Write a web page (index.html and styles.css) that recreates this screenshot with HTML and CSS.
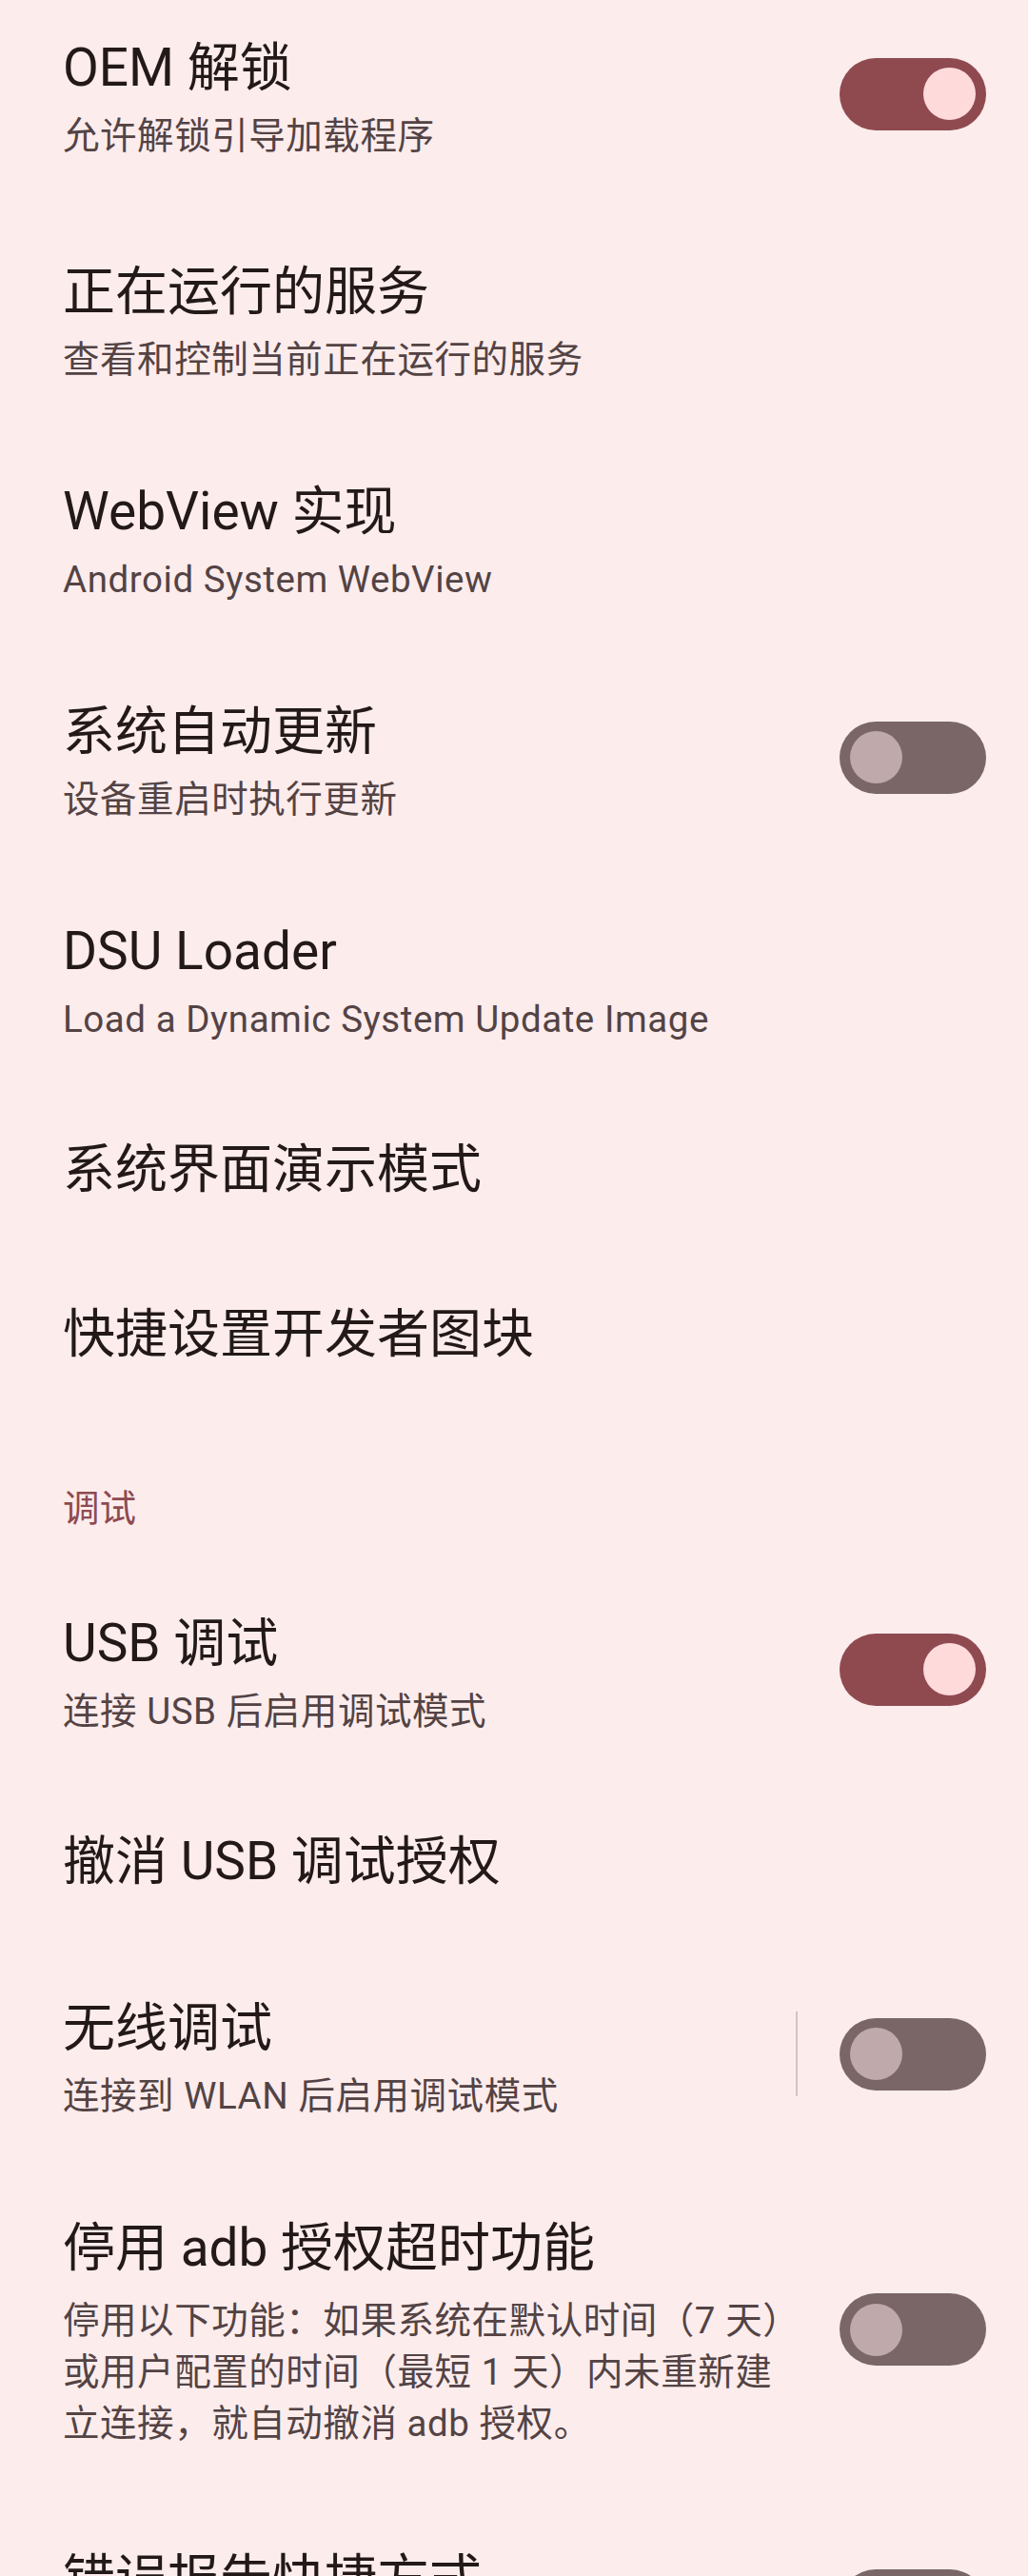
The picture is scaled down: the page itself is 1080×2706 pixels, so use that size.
FILE: index.html
```html
<!DOCTYPE html>
<html lang="zh-CN">
<head>
<meta charset="utf-8">
<title>开发者选项</title>
<link rel="stylesheet" href="styles.css">
</head>
<body>
<div class="list">
  <div class="pref first">
    <div class="text">
      <div class="title">OEM 解锁</div>
      <div class="summary">允许解锁引导加载程序</div>
    </div>
    <div class="widget"><div class="switch on"><span class="thumb"></span></div></div>
  </div>

  <div class="pref">
    <div class="text">
      <div class="title">正在运行的服务</div>
      <div class="summary">查看和控制当前正在运行的服务</div>
    </div>
  </div>

  <div class="pref">
    <div class="text">
      <div class="title">WebView 实现</div>
      <div class="summary">Android System WebView</div>
    </div>
  </div>

  <div class="pref">
    <div class="text">
      <div class="title">系统自动更新</div>
      <div class="summary">设备重启时执行更新</div>
    </div>
    <div class="widget"><div class="switch"><span class="thumb"></span></div></div>
  </div>

  <div class="pref">
    <div class="text">
      <div class="title">DSU Loader</div>
      <div class="summary">Load a Dynamic System Update Image</div>
    </div>
  </div>

  <div class="pref single">
    <div class="text">
      <div class="title">系统界面演示模式</div>
    </div>
  </div>

  <div class="pref single">
    <div class="text">
      <div class="title">快捷设置开发者图块</div>
    </div>
  </div>

  <div class="category">调试</div>

  <div class="pref">
    <div class="text">
      <div class="title">USB 调试</div>
      <div class="summary">连接 USB 后启用调试模式</div>
    </div>
    <div class="widget"><div class="switch on"><span class="thumb"></span></div></div>
  </div>

  <div class="pref single">
    <div class="text">
      <div class="title">撤消 USB 调试授权</div>
    </div>
  </div>

  <div class="pref">
    <div class="text">
      <div class="title">无线调试</div>
      <div class="summary">连接到 WLAN 后启用调试模式</div>
    </div>
    <div class="widget split"><span class="divider"></span><div class="switch"><span class="thumb"></span></div></div>
  </div>

  <div class="pref long">
    <div class="text">
      <div class="title">停用 adb 授权超时功能</div>
      <div class="summary">停用以下功能：如果系统在默认时间（7 天）或用户配置的时间（最短 1 天）内未重新建立连接，就自动撤消 adb 授权。</div>
    </div>
    <div class="widget"><div class="switch"><span class="thumb"></span></div></div>
  </div>

  <div class="pref">
    <div class="text">
      <div class="title">错误报告快捷方式</div>
      <div class="summary">在电源菜单中显示用于提交错误报告的按钮</div>
    </div>
    <div class="widget"><div class="switch"><span class="thumb"></span></div></div>
  </div>
</div>
</body>
</html>
```

FILE: styles.css
```css
html, body {
  margin: 0;
  padding: 0;
  background: #fcecec;
}

body {
  font-family: Roboto, "Noto Sans CJK SC", sans-serif;
  overflow: hidden;
}

.list {
  width: 1080px;
  margin-top: -17px;
}

.pref {
  display: flex;
  align-items: center;
  padding: 0 44px 0 66px;
}

.pref.first {
  margin-bottom: 4px;
}

.text {
  flex: none;
  width: 770px;
  padding: 53px 0 44px;
}

.pref.single .text {
  padding: 51px 0 52px;
}

.pref.long .text {
  padding-bottom: 48px;
}

.title {
  font-size: 55px;
  line-height: 70px;
  color: #231919;
}

.summary {
  margin-top: 10px;
  font-size: 38.5px;
  line-height: 54px;
  letter-spacing: 0.55px;
  color: #534344;
}

.pref.long .summary {
  margin-top: 15px;
}

.widget {
  display: flex;
  align-items: center;
  margin-left: 46px;
}

.widget.split {
  margin-left: 0;
}

.divider {
  width: 2px;
  height: 89px;
  background: #d6c2c3;
  margin-right: 44px;
}

.switch {
  width: 154px;
  height: 76px;
  box-sizing: border-box;
  border-radius: 38px;
  padding: 11px;
  display: flex;
  align-items: center;
  justify-content: flex-start;
  background: #7a6667;
}

.switch .thumb {
  width: 55px;
  height: 55px;
  border-radius: 50%;
  background: #bfa9aa;
}

.switch.on {
  background: #8f4a50;
  justify-content: flex-end;
}

.switch.on .thumb {
  background: #ffdadb;
}

.category {
  padding: 70px 0 26px 66px;
  font-size: 38.5px;
  line-height: 54px;
  color: #8e4a51;
}
```
